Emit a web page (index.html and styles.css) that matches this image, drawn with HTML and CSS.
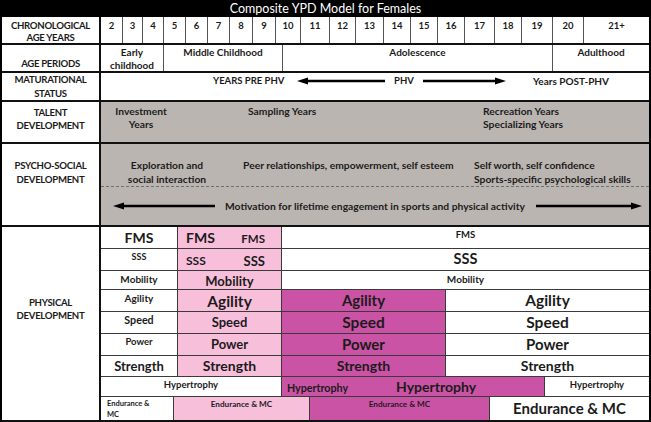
FILE: index.html
```html
<!DOCTYPE html>
<html>
<head>
<meta charset="utf-8">
<title>Composite YPD Model for Females</title>
<link rel="stylesheet" href="styles.css">
</head>
<body>
<div class="chart">
  <div class="title">Composite YPD Model for Females</div>

  <div class="row r-chrono">
    <div class="label lab-chrono">CHRONOLOGICAL<br>AGE YEARS</div>
    <div class="ages">
      <div class="age">2</div><div class="age">3</div><div class="age">4</div><div class="age">5</div>
      <div class="age">6</div><div class="age">7</div><div class="age">8</div><div class="age">9</div>
      <div class="age">10</div><div class="age">11</div><div class="age">12</div><div class="age">13</div>
      <div class="age">14</div><div class="age">15</div><div class="age">16</div><div class="age">17</div>
      <div class="age">18</div><div class="age">19</div><div class="age">20</div><div class="age">21+</div>
    </div>
  </div>

  <div class="row r-periods">
    <div class="label lab-bottom">AGE PERIODS</div>
    <div class="periods">
      <div class="period p-early">Early<br>childhood</div>
      <div class="period p-middle">Middle Childhood</div>
      <div class="period p-adol">Adolescence</div>
      <div class="period p-adult">Adulthood</div>
    </div>
  </div>

  <div class="row r-mat">
    <div class="label lab-mat">MATURATIONAL<br>STATUS</div>
    <div class="content mat">
      <span class="m-pre">YEARS PRE PHV</span>
      <svg class="m-arrow" width="88" height="8" viewBox="0 0 88 8"><path d="M9 4H88" stroke="#000" stroke-width="2.4"/><path d="M0 4L11 0.6V7.4Z" fill="#000"/></svg>
      <span class="m-phv">PHV</span>
      <svg class="m-arrow" width="83" height="8" viewBox="0 0 83 8"><path d="M0 4H74" stroke="#000" stroke-width="2.4"/><path d="M83 4L72 0.6V7.4Z" fill="#000"/></svg>
      <span class="m-post">Years POST-PHV</span>
    </div>
  </div>

  <div class="row r-talent">
    <div class="label lab-top">TALENT<br>DEVELOPMENT</div>
    <div class="content grey talent">
      <div class="t-inv">Investment<br>Years</div>
      <div class="t-samp">Sampling Years</div>
      <div class="t-rec">Recreation Years<br>Specializing Years</div>
    </div>
  </div>

  <div class="row r-psycho">
    <div class="label lab-psycho">PSYCHO-SOCIAL<br>DEVELOPMENT</div>
    <div class="content grey psycho">
      <div class="ps-top">
        <div class="ps-exp">Exploration and<br>social interaction</div>
        <div class="ps-peer">Peer relationships, empowerment, self esteem</div>
        <div class="ps-self">Self worth, self confidence<br>Sports-specific psychological skills</div>
      </div>
      <div class="ps-bottom">
        <svg width="102" height="8" viewBox="0 0 102 8"><path d="M9 4H102" stroke="#000" stroke-width="2.4"/><path d="M0 4L11 0.6V7.4Z" fill="#000"/></svg>
        <span class="ps-motiv">Motivation for lifetime engagement in sports and physical activity</span>
        <svg width="106" height="8" viewBox="0 0 106 8"><path d="M0 4H97" stroke="#000" stroke-width="2.4"/><path d="M106 4L95 0.6V7.4Z" fill="#000"/></svg>
      </div>
    </div>
  </div>

  <div class="row r-phys">
    <div class="label lab-phys">PHYSICAL<br>DEVELOPMENT</div>
    <div class="phys">
      <div class="prow h22">
        <div class="pc white w77 fs14">FMS</div>
        <div class="pc pink w104 split"><span class="fs14">FMS</span><span class="fs115 down">FMS</span></div>
        <div class="pc white grow fs95 top">FMS</div>
      </div>
      <div class="prow h22">
        <div class="pc white w77 fs9 top">SSS</div>
        <div class="pc pink w104 split low"><span class="fs12">SSS</span><span class="fs13">SSS</span></div>
        <div class="pc white grow fs145">SSS</div>
      </div>
      <div class="prow h19">
        <div class="pc white w77 fs10 top">Mobility</div>
        <div class="pc pink w104 fs13 low">Mobility</div>
        <div class="pc white grow fs10 top">Mobility</div>
      </div>
      <div class="prow h22">
        <div class="pc white w77 fs10 top">Agility</div>
        <div class="pc pink w104 fs155 low">Agility</div>
        <div class="pc mag w164 fs15">Agility</div>
        <div class="pc white grow fs155">Agility</div>
      </div>
      <div class="prow h22">
        <div class="pc white w77 fs105 top">Speed</div>
        <div class="pc pink w104 fs13">Speed</div>
        <div class="pc mag w164 fs155">Speed</div>
        <div class="pc white grow fs155">Speed</div>
      </div>
      <div class="prow h22">
        <div class="pc white w77 fs95 top">Power</div>
        <div class="pc pink w104 fs13">Power</div>
        <div class="pc mag w164 fs15">Power</div>
        <div class="pc white grow fs15">Power</div>
      </div>
      <div class="prow h21">
        <div class="pc white w77 fs13">Strength</div>
        <div class="pc pink w104 fs14">Strength</div>
        <div class="pc mag w164 fs14">Strength</div>
        <div class="pc white grow fs14">Strength</div>
      </div>
      <div class="prow h20">
        <div class="pc white w181 fs95 top">Hypertrophy</div>
        <div class="pc mag w263 hyp"><span class="fs105 hyp-small">Hypertrophy</span><span class="fs14 hyp-big">Hypertrophy</span></div>
        <div class="pc white grow fs95 top">Hypertrophy</div>
      </div>
      <div class="prow h23 last">
        <div class="pc white w73 fs75 endl">Endurance &amp;<br>MC</div>
        <div class="pc pink w136 fs8 top">Endurance &amp; MC</div>
        <div class="pc mag w180 fs8 top">Endurance &amp; MC</div>
        <div class="pc white grow fs15">Endurance &amp; MC</div>
      </div>
    </div>
  </div>
</div>
</body>
</html>
```

FILE: styles.css
```css
* { box-sizing: border-box; }
html, body { margin: 0; padding: 0; background: #fff; }
body {
  font-family: Lato, "Open Sans", "Liberation Sans", sans-serif;
  color: #1b1b1b;
}
.chart {
  width: 651px;
  height: 422px;
  border-left: 2px solid #000;
  border-right: 2px solid #000;
  display: flex;
  flex-direction: column;
  overflow: hidden;
}
.title {
  height: 17px;
  background: #000;
  color: #fff;
  font-size: 12.5px;
  line-height: 17px;
  text-align: center;
  margin: 0 -2px;
}
.row {
  display: flex;
  border-bottom: 2px solid #111;
  font-weight: 700;
}
.r-chrono { height: 28px; }
.r-periods { height: 28px; }
.r-mat { height: 29px; }
.r-talent { height: 42px; }
.r-psycho { height: 83px; }
.r-phys { height: 195px; }

.label {
  width: 99px;
  flex: none;
  border-right: 2px solid #111;
  font-size: 9.6px;
  letter-spacing: -0.3px;
  line-height: 13px;
  text-align: center;
  display: flex;
  justify-content: center;
  background: #fff;
}
.lab-chrono { align-items: flex-start; line-height: 12px; padding-top: 3px; }
.lab-bottom { align-items: flex-end; padding-bottom: 1px; }
.lab-mat { align-items: center; line-height: 14px; }
.lab-top { align-items: flex-start; padding-top: 4px; }
.lab-psycho { align-items: flex-start; line-height: 14px; padding-top: 15px; }
.lab-phys { align-items: center; padding-bottom: 30px; }

.content { flex: 1; }
.grey { background: #bbb5b1; }

/* ages */
.ages {
  flex: 1;
  display: grid;
  grid-template-columns: 21px 20px 21px 22px 22px 22px 23px 23px 25px 29px 26px 28px 27px 27px 27px 30px 27px 31px 31px 1fr;
}
.age {
  border-left: 1px solid #555;
  font-size: 9.5px;
  text-align: center;
  padding-top: 3px;
}
.age:first-child { border-left: none; }

/* periods */
.periods { flex: 1; display: flex; }
.period {
  border-left: 1px solid #555;
  font-size: 10px;
  line-height: 13px;
  text-align: center;
  padding-top: 1px;
}
.p-early { width: 62px; border-left: none; }
.p-middle { width: 119px; }
.p-adol { width: 270px; }
.p-adult { flex: 1; }

/* maturational */
.mat {
  display: flex;
  align-items: flex-start;
  font-size: 9.5px;
  line-height: 12px;
  padding-top: 2px;
  padding-left: 112px;
}
.m-pre { width: 84px; }
.m-arrow { margin-top: 2px; flex: none; }
.m-phv { width: 38px; text-align: center; }
.m-post { margin-left: 27px; font-size: 10px; }

/* talent */
.talent {
  display: flex;
  align-items: flex-start;
  font-size: 10.3px;
  line-height: 13px;
  padding-top: 3px;
  padding-left: 14px;
}
.t-inv { width: 54px; text-align: center; margin-left: -1px; }
.t-samp { margin-left: 80px; width: 235px; }

/* psycho */
.psycho { display: flex; flex-direction: column; }
.ps-top {
  height: 43px;
  display: flex;
  align-items: flex-end;
  font-size: 10.3px;
  line-height: 14px;
  padding-left: 25px;
  padding-bottom: 0;
  border-bottom: 1px dashed #707070;
}
.ps-exp { width: 82px; text-align: center; }
.ps-peer { margin-left: 35px; width: 231px; padding-bottom: 14px; }
.ps-bottom {
  flex: 1;
  display: flex;
  align-items: center;
  padding-left: 12px;
  padding-bottom: 1px;
  font-size: 10.3px;
}
.ps-motiv { margin-left: 10px; margin-right: 11px; }

/* physical */
.phys { flex: 1; display: flex; flex-direction: column; }
.prow { display: flex; border-bottom: 1px solid #3a3a3a; }
.prow.last { border-bottom: none; }
.h19 { height: 19px; }
.h20 { height: 20px; }
.h21 { height: 21px; }
.h22 { height: 22px; }
.h23 { height: 23px; }

.pc {
  display: flex;
  justify-content: center;
  align-items: center;
  border-right: 1px solid #3a3a3a;
  white-space: nowrap;
  line-height: 1;
}
.pc:last-child { border-right: none; }
.pc.top { align-items: flex-start; padding-top: 3px; }
.pc.low { padding-top: 3px; }
.white { background: #fff; }
.pink { background: #f8bfdb; }
.mag { background: #cb53a6; }

.w73 { width: 73px; }
.w77 { width: 77px; }
.w104 { width: 104px; }
.w136 { width: 136px; }
.w164 { width: 164px; }
.w180 { width: 180px; }
.w181 { width: 181px; }
.w263 { width: 263px; }
.grow { flex: 1; }

.split { justify-content: space-between; padding: 0 16px 0 8px; }
.split .down { padding-top: 3px; }

.hyp { justify-content: flex-start; align-items: center; padding-left: 5px; }
.hyp-small { padding-top: 4px; }
.hyp-big { margin-left: 48px; }

.endl {
  justify-content: flex-start;
  text-align: left;
  white-space: normal;
  padding-left: 6px;
  line-height: 11px;
  align-items: center;
}

.fs75 { font-size: 7.5px; }
.fs8 { font-size: 8.2px; }
.fs9 { font-size: 9px; }
.fs95 { font-size: 9.5px; }
.fs10 { font-size: 10px; }
.fs105 { font-size: 10.7px; }
.fs115 { font-size: 11.5px; }
.fs12 { font-size: 12px; }
.fs13 { font-size: 13px; }
.fs14 { font-size: 14px; }
.fs145 { font-size: 14.5px; }
.fs15 { font-size: 15px; }
.fs155 { font-size: 15.5px; }
```
